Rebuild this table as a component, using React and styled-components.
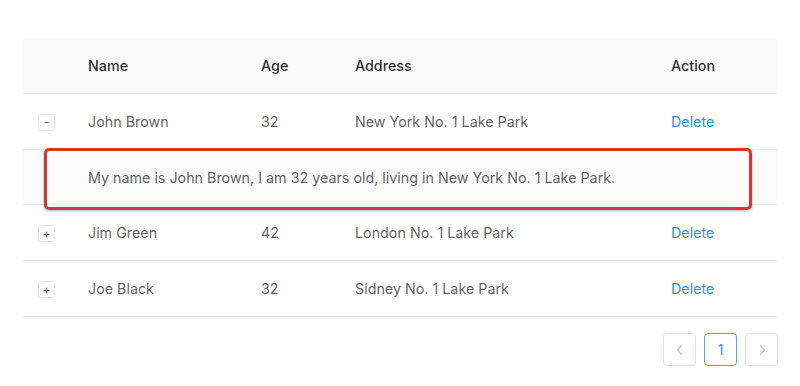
import React from "react";
import styled, { createGlobalStyle } from "styled-components";

const GlobalStyle = createGlobalStyle`
  body {
    margin: 0;
    background: #fff;
    font-family: Inter, "Liberation Sans", Arial, sans-serif;
  }
`;

const Page = styled.div`
  width: 800px;
  height: 386px;
  padding: 38px 22px 0;
  box-sizing: border-box;
`;

const TableWrap = styled.div`
  position: relative;
`;

const Table = styled.table`
  width: 756px;
  border-collapse: collapse;
  table-layout: fixed;
  font-size: 14.3px;
  color: rgba(0, 0, 0, 0.65);
`;

const HeadCell = styled.th`
  background: #fafafa;
  color: rgba(0, 0, 0, 0.85);
  font-weight: 500;
  text-align: left;
  padding: 16px;
  line-height: 23px;
  border-bottom: 1px solid #e8e8e8;
`;

const Cell = styled.td`
  padding: ${({ $expanded }) => ($expanded ? "16px 16px 15px" : "16px")};
  line-height: 23px;
  border-bottom: 1px solid #e8e8e8;
  background: ${({ $expanded }) => ($expanded ? "#fbfbfb" : "#fff")};
  white-space: nowrap;
`;

const ExpandIcon = styled.span`
  display: inline-flex;
  align-items: center;
  justify-content: center;
  width: 15px;
  height: 15px;
  border: 1px solid #e8e8e8;
  border-radius: 2px;
  background: #fff;
  color: rgba(0, 0, 0, 0.65);
  font-size: 13px;
  line-height: 1;
  vertical-align: middle;
  margin-top: -2px;
`;

const DeleteLink = styled.a`
  color: #3a8ee6;
  text-decoration: none;
`;

const Highlight = styled.div`
  position: absolute;
  left: 22px;
  top: 110px;
  width: 708px;
  height: 62px;
  box-sizing: border-box;
  border: 3px solid #d2382f;
  border-radius: 5px;
  box-shadow: 0 1px 3px rgba(0, 0, 0, 0.3);
  pointer-events: none;
`;

const Pager = styled.div`
  display: flex;
  justify-content: flex-end;
  gap: 8px;
  margin-top: 16px;
`;

const PageButton = styled.button`
  width: 33px;
  height: 33px;
  padding: 0;
  display: flex;
  align-items: center;
  justify-content: center;
  background: #fff;
  border: 1px solid ${({ $active }) => ($active ? "#5b9ee8" : "#e3e3e3")};
  border-radius: 4px;
  color: ${({ $active }) => ($active ? "#3a8ee6" : "#c4c4c4")};
  font-family: Inter, "Liberation Sans", Arial, sans-serif;
  font-size: 14px;
`;

const Chevron = ({ dir }) => (
  <svg width="10" height="12" viewBox="0 0 10 12" fill="none">
    <path
      d={dir === "left" ? "M7 1 L2.5 6 L7 11" : "M3 1 L7.5 6 L3 11"}
      stroke="currentColor"
      strokeWidth="1.2"
    />
  </svg>
);

const rows = [
  { key: 1, name: "John Brown", age: 32, address: "New York No. 1 Lake Park", open: true },
  { key: 2, name: "Jim Green", age: 42, address: "London No. 1 Lake Park" },
  { key: 3, name: "Joe Black", age: 32, address: "Sidney No. 1 Lake Park" },
];

const App = () => {
  return (
    <Page>
      <GlobalStyle />
      <TableWrap>
        <Table>
          <colgroup>
            <col style={{ width: 50 }} />
            <col style={{ width: 173 }} />
            <col style={{ width: 94 }} />
            <col style={{ width: 316 }} />
            <col style={{ width: 123 }} />
          </colgroup>
          <thead>
            <tr>
              <HeadCell />
              <HeadCell>Name</HeadCell>
              <HeadCell>Age</HeadCell>
              <HeadCell>Address</HeadCell>
              <HeadCell>Action</HeadCell>
            </tr>
          </thead>
          <tbody>
            {rows.map((r) => (
              <React.Fragment key={r.key}>
                <tr>
                  <Cell>
                    <ExpandIcon>{r.open ? "-" : "+"}</ExpandIcon>
                  </Cell>
                  <Cell>{r.name}</Cell>
                  <Cell>{r.age}</Cell>
                  <Cell>{r.address}</Cell>
                  <Cell>
                    <DeleteLink href="#">Delete</DeleteLink>
                  </Cell>
                </tr>
                {r.open ? (
                  <tr>
                    <Cell $expanded />
                    <Cell $expanded colSpan={4}>
                      My name is {r.name}, I am {r.age} years old, living in {r.address}.
                    </Cell>
                  </tr>
                ) : null}
              </React.Fragment>
            ))}
          </tbody>
        </Table>
        <Highlight />
      </TableWrap>
      <Pager>
        <PageButton>
          <Chevron dir="left" />
        </PageButton>
        <PageButton $active>1</PageButton>
        <PageButton>
          <Chevron dir="right" />
        </PageButton>
      </Pager>
    </Page>
  );
};

export default App;
